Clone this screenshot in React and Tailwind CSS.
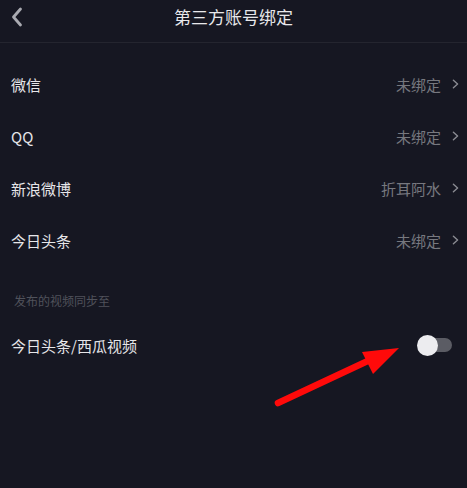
import React from "react";

const accounts = [
  { name: "微信", status: "未绑定" },
  { name: "QQ", status: "未绑定" },
  { name: "新浪微博", status: "折耳阿水" },
  { name: "今日头条", status: "未绑定" },
];

function Chevron({ className }) {
  return (
    <svg viewBox="0 0 8 12" className={className} fill="none" stroke="currentColor" strokeWidth="1.7" strokeLinecap="round" strokeLinejoin="round">
      <path d="M1.5 1.5 6.5 6l-5 4.5" />
    </svg>
  );
}

export default function App() {
  return (
    <div
      className="relative w-[467px] h-[488px] overflow-hidden bg-[#161722] text-[#e6e6e9]"
      style={{ fontFamily: '"Noto Sans CJK SC", "Noto Sans", sans-serif' }}
    >
      {/* top bar */}
      <div className="relative flex items-center justify-center h-[43px] border-b border-[#24252f]">
        <button className="absolute left-[11px] top-[7px] text-[#a9aab1]">
          <svg viewBox="0 0 12 20" className="w-[12px] h-[20px]" fill="none" stroke="currentColor" strokeWidth="2.8" strokeLinecap="round" strokeLinejoin="round">
            <path d="M9.5 2 2.5 10l7 8" />
          </svg>
        </button>
        <h1 className="text-[17px] leading-none text-[#e8e8eb] mt-[-9px]">第三方账号绑定</h1>
      </div>

      <div className="pt-[15px]">
        {accounts.map((a) => (
          <div key={a.name} className="flex items-center justify-between h-[52px] pl-[11px] pr-[8px]">
            <span className="text-[15px] leading-none">{a.name}</span>
            <div className="flex items-center gap-[11px] text-[#77787f]">
              <span className="text-[15px] leading-none">{a.status}</span>
              <Chevron className="w-[7px] h-[10px] text-[#8a8b92]" />
            </div>
          </div>
        ))}
      </div>

      <div className="pt-[26px] pl-[14px] text-[12px] leading-[18px] text-[#50525b]">发布的视频同步至</div>

      <div className="flex items-center justify-between h-[52px] pl-[11px] pr-[15px] mt-[9px]">
        <span className="text-[15px] leading-none">今日头条/西瓜视频</span>
        <div className="relative w-[35px] h-[21px] flex items-center">
          <div className="absolute right-0 w-[30px] h-[14px] rounded-full bg-[#5b5c64]" />
          <div className="absolute left-0 w-[21px] h-[21px] rounded-full bg-[#ececef]" />
        </div>
      </div>

      {/* red annotation arrow */}
      <svg className="absolute left-0 top-0 w-[467px] h-[488px] pointer-events-none" viewBox="0 0 467 488">
        <line x1="278" y1="403" x2="372" y2="359" stroke="#ff0a0a" strokeWidth="6.5" strokeLinecap="round" />
        <polygon points="399,348 362,352 373,374" fill="#ff0a0a" />
      </svg>
    </div>
  );
}
